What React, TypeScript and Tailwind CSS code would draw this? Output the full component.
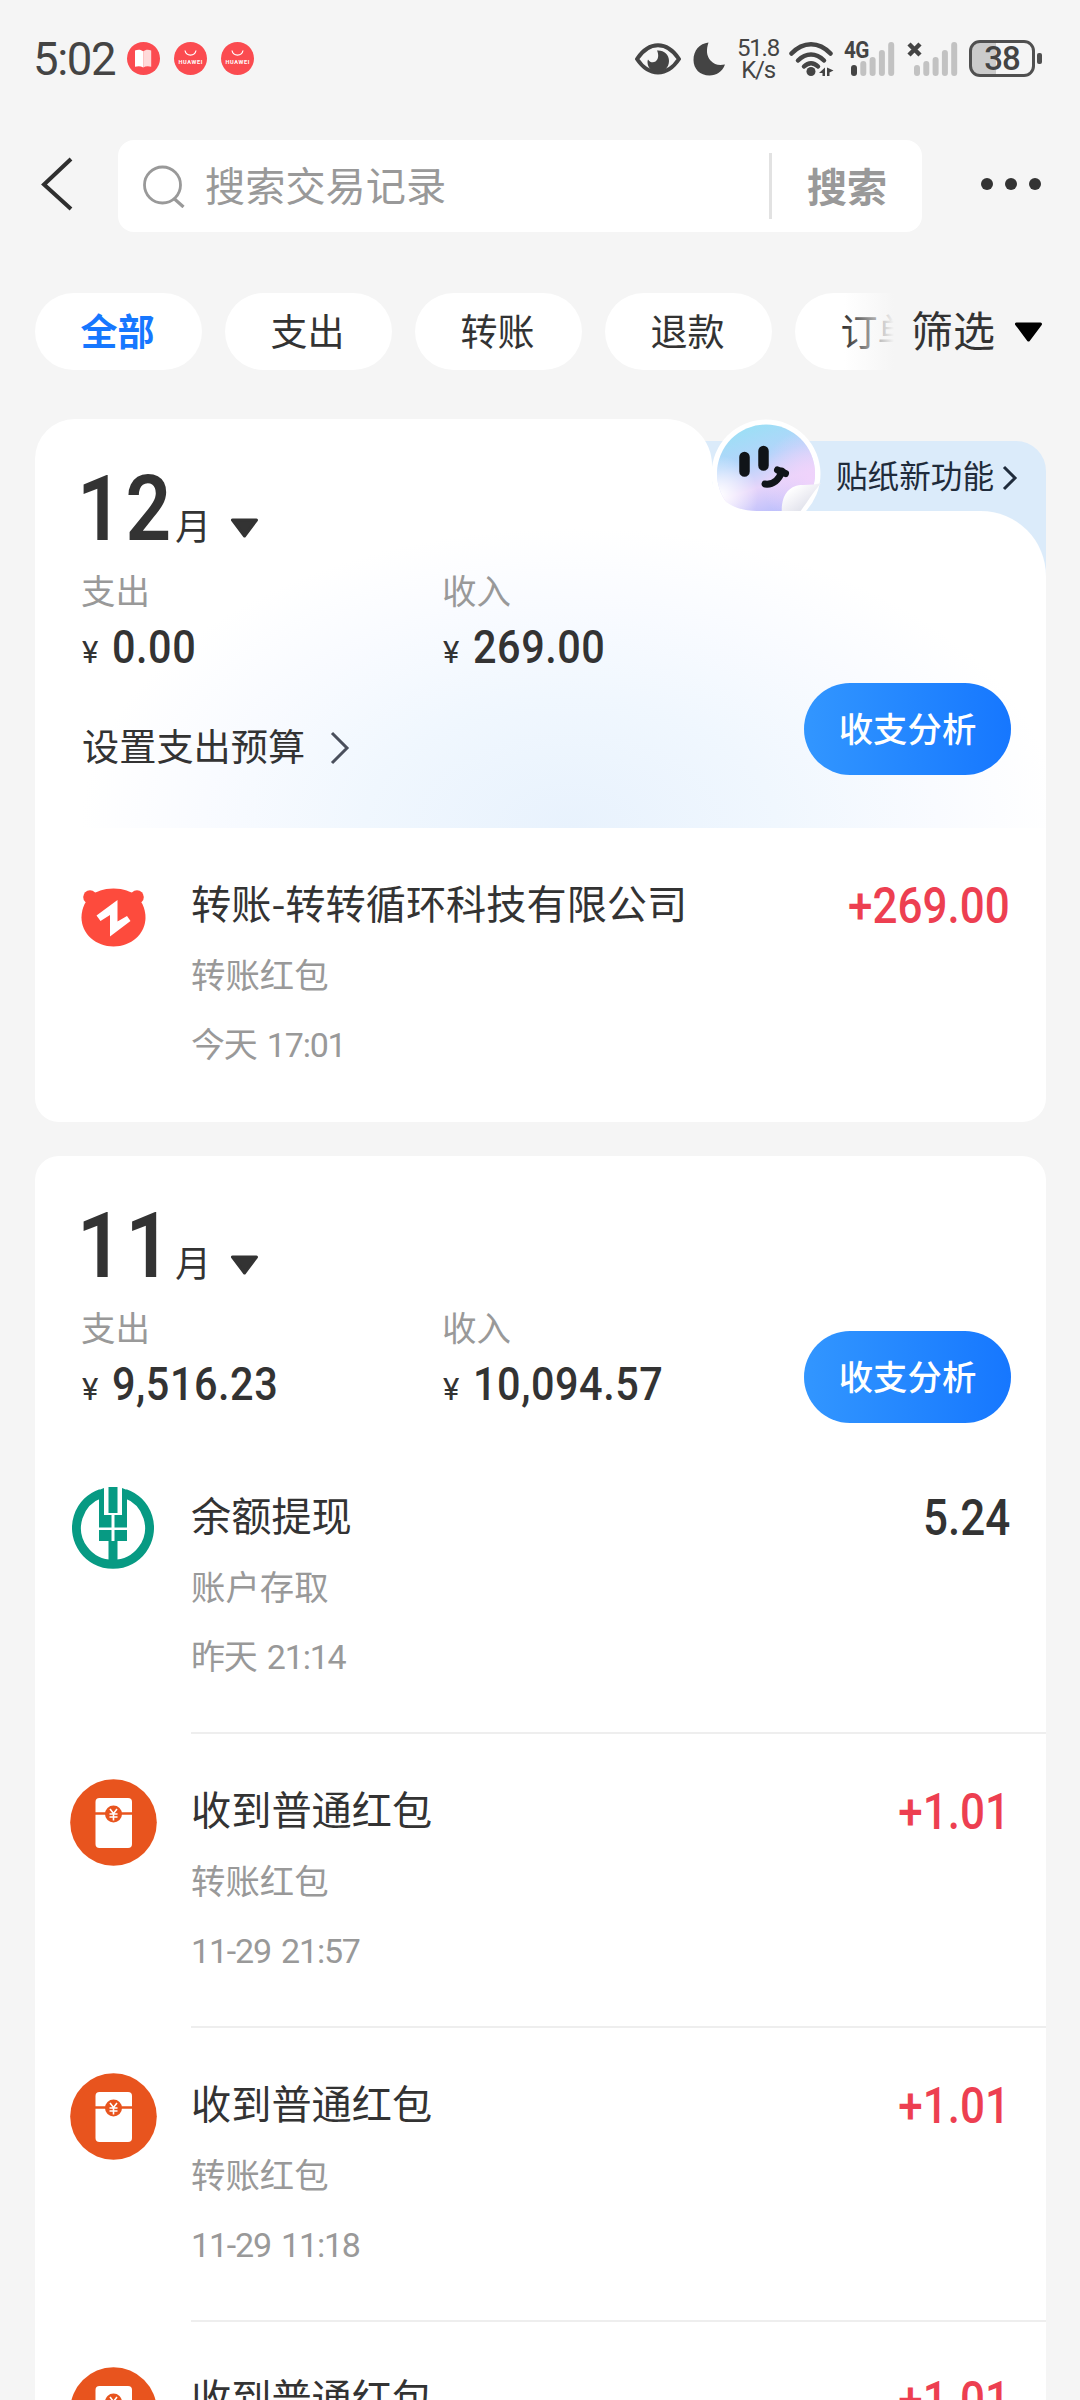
import type { ReactNode } from "react";
import clsx from "clsx";

type IconKind = "zhuanzhuan" | "abc" | "packet";

type Transaction = {
  icon: IconKind;
  title: string;
  category: string;
  time: string;
  amount: string;
  income?: boolean;
};

const filters = ["全部", "支出", "转账", "退款", "订单"];

const december: Transaction[] = [
  {
    icon: "zhuanzhuan",
    title: "转账-转转循环科技有限公司",
    category: "转账红包",
    time: "今天 17:01",
    amount: "+269.00",
    income: true
  }
];

const november: Transaction[] = [
  {
    icon: "abc",
    title: "余额提现",
    category: "账户存取",
    time: "昨天 21:14",
    amount: "5.24"
  },
  {
    icon: "packet",
    title: "收到普通红包",
    category: "转账红包",
    time: "11-29 21:57",
    amount: "+1.01",
    income: true
  },
  {
    icon: "packet",
    title: "收到普通红包",
    category: "转账红包",
    time: "11-29 11:18",
    amount: "+1.01",
    income: true
  },
  {
    icon: "packet",
    title: "收到普通红包",
    category: "转账红包",
    time: "11-29 10:42",
    amount: "+1.01",
    income: true
  }
];

function HuaweiBadge() {
  return (
    <svg className="size-[33px]" viewBox="0 0 33 33">
      <circle cx="16.5" cy="16.5" r="16.5" fill="#fb4b50" />
      <path d="M11 8.5a5.6 5.6 0 0 0 11 0" fill="none" stroke="#fff" strokeWidth="1.2" />
      <text
        x="16.5"
        y="22"
        fill="#fff"
        fontSize="5.6"
        fontWeight="700"
        textAnchor="middle"
        textLength="24"
      >
        HUAWEI
      </text>
    </svg>
  );
}

function SignalBars({ active }: { active: boolean }) {
  return (
    <svg className="h-[34px] w-[44px]" viewBox="0 0 44 34">
      <rect x="0" y="23" width="6" height="11" rx="3" fill={active ? "#444" : "#c2c2c2"} />
      <rect x="9.3" y="19" width="6" height="15" rx="3" fill="#c2c2c2" />
      <rect x="18.6" y="15" width="6" height="19" rx="3" fill="#c2c2c2" />
      <rect x="27.9" y="8" width="6" height="26" rx="3" fill="#c2c2c2" />
      <rect x="37.2" y="0" width="6" height="34" rx="3" fill="#c2c2c2" />
    </svg>
  );
}

function StatusBar() {
  return (
    <div className="flex h-[117px] items-center pl-[33px] pr-[38px] text-[#444]">
      <span className="w-[94px] pt-[3px] text-[45.500px] leading-none tracking-[-1.400px]">
        5:02
      </span>
      <div className="flex gap-[14px]">
        <svg className="size-[33px]" viewBox="0 0 33 33">
          <circle cx="16.5" cy="16.5" r="16.5" fill="#fb4b50" />
          <path d="M8 8.500c3-1.300 6.200-1 8.200.8v16.200c-2.300-1.500-5-1.700-8.200-.8z" fill="#fff" />
          <path d="M16.200 9.300c2.200-1.800 5.100-2.100 8-.8v16.200c-3-.9-5.700-.7-8 .8z" fill="#ffd9d9" />
        </svg>
        <HuaweiBadge />
        <HuaweiBadge />
      </div>

      <div className="ml-auto flex items-center">
        <svg className="h-[32px] w-[46px]" viewBox="0 0 46 32">
          <path
            d="M2 16C8 7 15 2.300 23 2.300S38 7 44 16c-6 9-13 13.500-21 13.500S8 25 2 16z"
            fill="none"
            stroke="#444"
            strokeWidth="4"
            strokeLinejoin="round"
          />
          <path d="M22 7.500c7-.5 12 4 12 10.500s-5 11-11 11-10.500-4-10.500-10c0-1 .2-1.800.5-2.500 2 3 5 3.500 7.500 2 3-2 3.500-7 1.500-11z" fill="#444" />
        </svg>
        <svg className="ml-[12px] h-[34px] w-[33px]" viewBox="0 0 33 34">
          <path d="M15.500.5C13 8 13.500 14 17.500 18.500S26 23.500 32 22.500C29 30 23.500 33.500 16.500 33.500 7 33.500.5 27 .5 18 .5 8.500 6.500 1.500 15.500.5z" fill="#444" />
        </svg>
        <div className="mr-[1px] ml-[10px] w-[44px] pt-[1px] text-center text-[24px] leading-[22px] tracking-[-1.200px]">
          <p>51.8</p>
          <p>K/s</p>
        </div>
        <svg className="ml-[8px] h-[36px] w-[45px]" viewBox="0 0 45 36">
          <g fill="none" stroke="#444" strokeWidth="4.500" strokeLinecap="round">
            <path d="M2.500 12.500C14 0 30 0 41.500 12.500" />
            <path d="M9 19.500c8-8 18-8 26 0" />
            <path d="M15 25.500c4.500-4.500 9.500-4.500 14 0" />
          </g>
          <circle cx="22" cy="30.500" r="4.500" fill="#444" />
          <path d="M36 26.500v8.500h-2.500v-3H30zM38 26.500l6.500 3-4 2v3.500H38z" fill="#444" />
        </svg>
        <div className="relative ml-[17px]">
          <SignalBars active />
          <span className="absolute -top-[3px] -left-[7px] origin-left scale-x-90 text-[23px] leading-[24px] font-bold tracking-[-0.800px]">
            4G
          </span>
        </div>
        <div className="relative ml-[19px]">
          <SignalBars active={false} />
          <svg className="absolute top-0 -left-[7px] size-[15px]" viewBox="0 0 15 15">
            <path d="M2 2l11 11M13 2L2 13" stroke="#444" strokeWidth="4.500" />
          </svg>
        </div>
        <div className="relative ml-[11px] flex h-[37px] w-[66px] items-center justify-center rounded-[11px] border-[3px] border-[#505050] bg-linear-to-r from-[#cbcbcb] from-40% to-transparent to-40%">
          <span className="text-[33px] leading-none font-medium tracking-[-1px]">38</span>
        </div>
        <span className="ml-[2px] h-[11px] w-[5px] rounded-[2px] bg-[#505050]" />
      </div>
    </div>
  );
}

function SearchHeader() {
  return (
    <div className="mt-[23px] flex h-[92px] items-center">
      <svg className="mb-[4px] ml-[39px] h-[54px] w-[34px]" viewBox="0 0 34 54">
        <path d="M32 2L5 27.500L32 52" fill="none" stroke="#2f2f2f" strokeWidth="4" />
      </svg>
      <div className="ml-[45px] flex h-full w-[804px] items-center rounded-[16px] bg-white text-[#999]">
        <svg className="ml-[24px] size-[44px]" viewBox="0 0 44 44">
          <circle cx="20.500" cy="21" r="18" fill="none" stroke="#999" strokeWidth="2.800" />
          <path d="M32.500 35l9 8" stroke="#999" strokeWidth="3.200" />
        </svg>
        <span className="ml-[19px] pt-[3px] text-[40.200px] leading-[56px]">搜索交易记录</span>
        <span className="ml-auto h-[66px] w-[3px] bg-[#e2e2e2]" />
        <button className="w-[150px] pt-[5px] text-[40px] leading-[56px] font-bold">搜索</button>
      </div>
      <div className="mb-[4px] ml-[59px] flex gap-[12px]">
        <span className="size-[12px] rounded-full bg-[#333]" />
        <span className="size-[12px] rounded-full bg-[#333]" />
        <span className="size-[12px] rounded-full bg-[#333]" />
      </div>
    </div>
  );
}

function Triangle({ className }: { className?: string }) {
  return (
    <svg className={clsx("h-[20px] w-[29px] shrink-0", className)} viewBox="0 0 29 20">
      <path
        d="M2.500 2h24L14.500 18z"
        fill="currentColor"
        stroke="currentColor"
        strokeWidth="3"
        strokeLinejoin="round"
      />
    </svg>
  );
}

function FilterBar() {
  return (
    <div className="mt-[61px] flex h-[77px] items-center pl-[35px]">
      <div className="relative flex h-full w-[859px] gap-[23px] overflow-hidden">
        {filters.map((filter, index) => (
          <button
            key={filter}
            className={clsx(
              "h-full w-[167px] shrink-0 rounded-full bg-white pt-[4px] pr-[2px] text-[37px]",
              index === 0 ? "font-bold text-[#1677ff]" : "text-[#333]"
            )}
          >
            {filter}
          </button>
        ))}
        <div className="absolute inset-y-0 right-0 w-[50px] bg-linear-to-r from-transparent to-[#f5f5f5]" />
      </div>
      <span className="ml-[17px] pt-[3px] text-[42px] leading-[60px] text-[#333]">筛选</span>
      <Triangle className="ml-[19px] text-black" />
    </div>
  );
}

function StickerPromo() {
  return (
    <div className="absolute top-[22px] right-0 h-[160px] w-[360px] rounded-tr-[30px] bg-[#dbebfa]">
      <svg className="absolute -top-[22px] left-[25px] size-[110px]" viewBox="0 0 110 110">
        <defs>
          <linearGradient id="sticker" x1="0.3" y1="0" x2="0.62" y2="1">
            <stop offset="0" stopColor="#9ae0f5" />
            <stop offset="0.35" stopColor="#b4d4fb" />
            <stop offset="0.62" stopColor="#e6d4fa" />
            <stop offset="1" stopColor="#adb8fc" />
          </linearGradient>
          <radialGradient id="shine" cx="0.02" cy="0.72" r="0.4">
            <stop offset="0" stopColor="#fff" />
            <stop offset="1" stopColor="#fff" stopOpacity="0" />
          </radialGradient>
          <radialGradient id="blush" cx="0.95" cy="0.55" r="0.5">
            <stop offset="0" stopColor="#f0d3fb" />
            <stop offset="1" stopColor="#f0d3fb" stopOpacity="0" />
          </radialGradient>
          <linearGradient id="curl" x1="0.2" y1="0.2" x2="0.7" y2="0.8">
            <stop offset="0" stopColor="#fff" />
            <stop offset="0.5" stopColor="#eeeef4" />
            <stop offset="1" stopColor="#dcdee8" />
          </linearGradient>
        </defs>
        <circle cx="55" cy="55" r="54.500" fill="#fff" />
        <circle cx="55" cy="54.500" r="49" fill="url(#sticker)" />
        <circle cx="55" cy="54.500" r="49" fill="url(#shine)" />
        <circle cx="55" cy="54.500" r="49" fill="url(#blush)" />
        <path d="M110 64C100 76 96 84 88 94L71 98C69 76 78 66 92 66c8 0 14-1 18-2z" fill="url(#curl)" />
        <g stroke="#101418" strokeLinecap="round" fill="none">
          <path d="M33.500 38v14.500M52.500 32v14.500" strokeWidth="10.500" />
          <path d="M54 65c8 1 14-4 17-13" strokeWidth="7" />
          <path d="M66.500 51l8 3.500" strokeWidth="7" />
        </g>
      </svg>
      <div className="flex items-center pt-[14px] pl-[150px] text-[#1f2b3b]">
        <span className="text-[31.600px] leading-[46px]">贴纸新功能</span>
        <svg className="ml-[8px] h-[26px] w-[16px]" viewBox="0 0 16 26">
          <path d="M2 2l11 11L2 24" fill="none" stroke="currentColor" strokeWidth="3" />
        </svg>
      </div>
    </div>
  );
}

// White tab that steps down under the sticker promo, with the soft blue glow at the bottom.
function StepBackground() {
  return (
    <>
      <StickerPromo />
      <div className="absolute top-0 left-0 h-[120px] w-[677px] rounded-tl-[40px] rounded-tr-[46px] bg-white" />
      <svg className="absolute top-[55px] left-[676px] h-[38px] w-[50px]" viewBox="0 0 50 38">
        <path d="M0 0C1 22 20 37 46 37V38H0z" fill="#fff" />
      </svg>
      <div className="absolute inset-x-0 top-[92px] bottom-0 rounded-tr-[65px] bg-white bg-[radial-gradient(ellipse_490px_300px_at_53%_100%,#e8f2fd_0%,#f0f7fe_42%,#f9fbff_75%,#ffffff_100%)]" />
    </>
  );
}

function Amount({ label, value }: { label: string; value: string }) {
  return (
    <div className="w-[361px]">
      <p className="-ml-px text-[34.500px] leading-[50px] text-[#999]">{label}</p>
      <p className="mt-[7px] flex items-baseline leading-[46px] text-[#333]">
        <span className="w-[30px] text-[31px]">¥</span>
        <span className="origin-left scale-x-90 text-[46px] font-medium tracking-[0.600px]">{value}</span>
      </p>
    </div>
  );
}

type MonthHeaderProps = {
  month: string;
  expense: string;
  income: string;
  height: string;
  buttonTop: string;
  children?: ReactNode;
};

function MonthHeader({ month, expense, income, height, buttonTop, children }: MonthHeaderProps) {
  return (
    <div className={clsx("relative pl-[47px]", height)}>
      <div className="flex items-baseline pt-[44px] text-[#333]">
        <span className="-ml-[5px] w-[98px] origin-left scale-x-88 text-[91px] leading-[92px] font-semibold tracking-[3px]">
          {month}
        </span>
        <span className="text-[36px] leading-[50px]">月</span>
        <Triangle className="mb-[2px] ml-[19px] -translate-y-[2px]" />
      </div>
      <div className="mt-[12px] flex">
        <Amount label="支出" value={expense} />
        <Amount label="收入" value={income} />
      </div>
      {children}
      <button
        className={clsx(
          "absolute right-[35px] h-[92px] w-[207px] rounded-full bg-linear-to-r from-[#3296ff] to-[#1677ff] pt-[3px] text-[34.400px] font-medium text-white",
          buttonTop
        )}
      >
        收支分析
      </button>
    </div>
  );
}

function TransactionIcon({ kind }: { kind: IconKind }) {
  if (kind === "zhuanzhuan") {
    return (
      <svg className="mt-[2px] h-[59px] w-[65px]" viewBox="0 0 65 59">
        <g fill="#fd4b3d">
          <circle cx="9" cy="9" r="6.800" />
          <circle cx="56" cy="9" r="6.800" />
          <path d="M32.500 0.500C43 .5 50 4 53 6c7 5 11.500 14 11.500 23.500C64.500 46 50 58.500 32.500 58.500S.5 46 .5 29.500C.5 20 5 11 12 6c3-2 10-5.500 20.500-5.500z" />
        </g>
        <path d="M15.500 27.500L36.500 12v21.500L46 28l3.500 5L29 48.500V27l-9.500 6z" fill="#fff" />
      </svg>
    );
  }

  if (kind === "abc") {
    return (
      <svg className="size-[82px]" viewBox="0 0 82 82">
        <path
          d="M29 6.400A36.500 36.500 0 1 0 53 6.400"
          fill="none"
          stroke="#079a83"
          strokeWidth="9"
        />
        <g fill="#079a83">
          <path d="M27 3l5-2V28h7.500v12.500H27zM55 3l-5-2V28h-7.500v12.500H55z" />
          <path d="M36.500 0h9v26h-9zM27 43h12.500v11H27zM42.500 43H55v11H42.500zM36.500 54h9v22h-9z" />
        </g>
      </svg>
    );
  }

  return (
    <svg className="size-[87px]" viewBox="0 0 87 87">
      <circle cx="43.500" cy="43.500" r="43.300" fill="#e8541e" />
      <rect x="25.500" y="19" width="36.500" height="50" rx="4" fill="#fff" />
      <path d="M25 34.500h37" stroke="#e8541e" strokeWidth="2.500" />
      <circle cx="43.500" cy="35" r="8.500" fill="#e8541e" />
      <path d="M40 30l3.500 4.500L47 30M43.500 34v7.500M39.500 35h8M39.500 38h8" fill="none" stroke="#fff" strokeWidth="1.600" />
    </svg>
  );
}

function TransactionRow({ item, divider }: { item: Transaction; divider: boolean }) {
  return (
    <div className="flex h-[294px]">
      <div className="flex h-[176px] w-[156px] shrink-0 items-center justify-center">
        <TransactionIcon kind={item.icon} />
      </div>
      <div
        className={clsx(
          "flex flex-1 justify-between border-b-2 pt-[46px] pr-[36px]",
          divider ? "border-[#eeeeee]" : "border-transparent"
        )}
      >
        <div>
          <p className="font-['Noto_Sans_CJK_SC',sans-serif] text-[40.200px] leading-[56px] text-[#333]">
            {item.title}
          </p>
          <p className="mt-[21px] text-[34.400px] leading-[50px] text-[#999]">{item.category}</p>
          <p className="mt-[19px] text-[34px] leading-[50px] tracking-[-1.200px] text-[#999] [word-spacing:3px]">
            {item.time}
          </p>
        </div>
        <span
          className={clsx(
            "mt-[2px] origin-right scale-x-88 text-[50px] leading-[60px] font-medium",
            item.income ? "text-[#ed3f51]" : "text-[#333]"
          )}
        >
          {item.amount}
        </span>
      </div>
    </div>
  );
}

export default function App() {
  return (
    <main className="h-[2400px] w-[1080px] overflow-hidden bg-[#f5f5f5] font-[Roboto,'Noto_Sans_CJK_SC',sans-serif]">
      <StatusBar />
      <SearchHeader />
      <FilterBar />

      <section className="relative mx-[35px] mt-[49px] w-[1011px]">
        <div className="relative">
          <StepBackground />
          <MonthHeader
            month="12"
            expense="0.00"
            income="269.00"
            height="h-[409px]"
            buttonTop="top-[264px]"
          >
            <div className="mt-[45px] flex items-center text-[#333]">
              <span className="text-[37.200px] leading-[54px]">设置支出预算</span>
              <svg className="ml-[25px] h-[34px] w-[20px]" viewBox="0 0 20 34">
                <path d="M2 2l15 15L2 32" fill="none" stroke="#4a4f5c" strokeWidth="3" />
              </svg>
            </div>
          </MonthHeader>
        </div>
        <div className="rounded-b-[24px] bg-white">
          {december.map((item) => (
            <TransactionRow key={item.time} item={item} divider={false} />
          ))}
        </div>
      </section>

      <section className="mx-[35px] mt-[34px] w-[1011px] rounded-t-[24px] bg-white">
        <MonthHeader
          month="11"
          expense="9,516.23"
          income="10,094.57"
          height="h-[284px]"
          buttonTop="top-[175px]"
        />
        {november.map((item) => (
          <TransactionRow key={item.time} item={item} divider />
        ))}
      </section>
    </main>
  );
}
